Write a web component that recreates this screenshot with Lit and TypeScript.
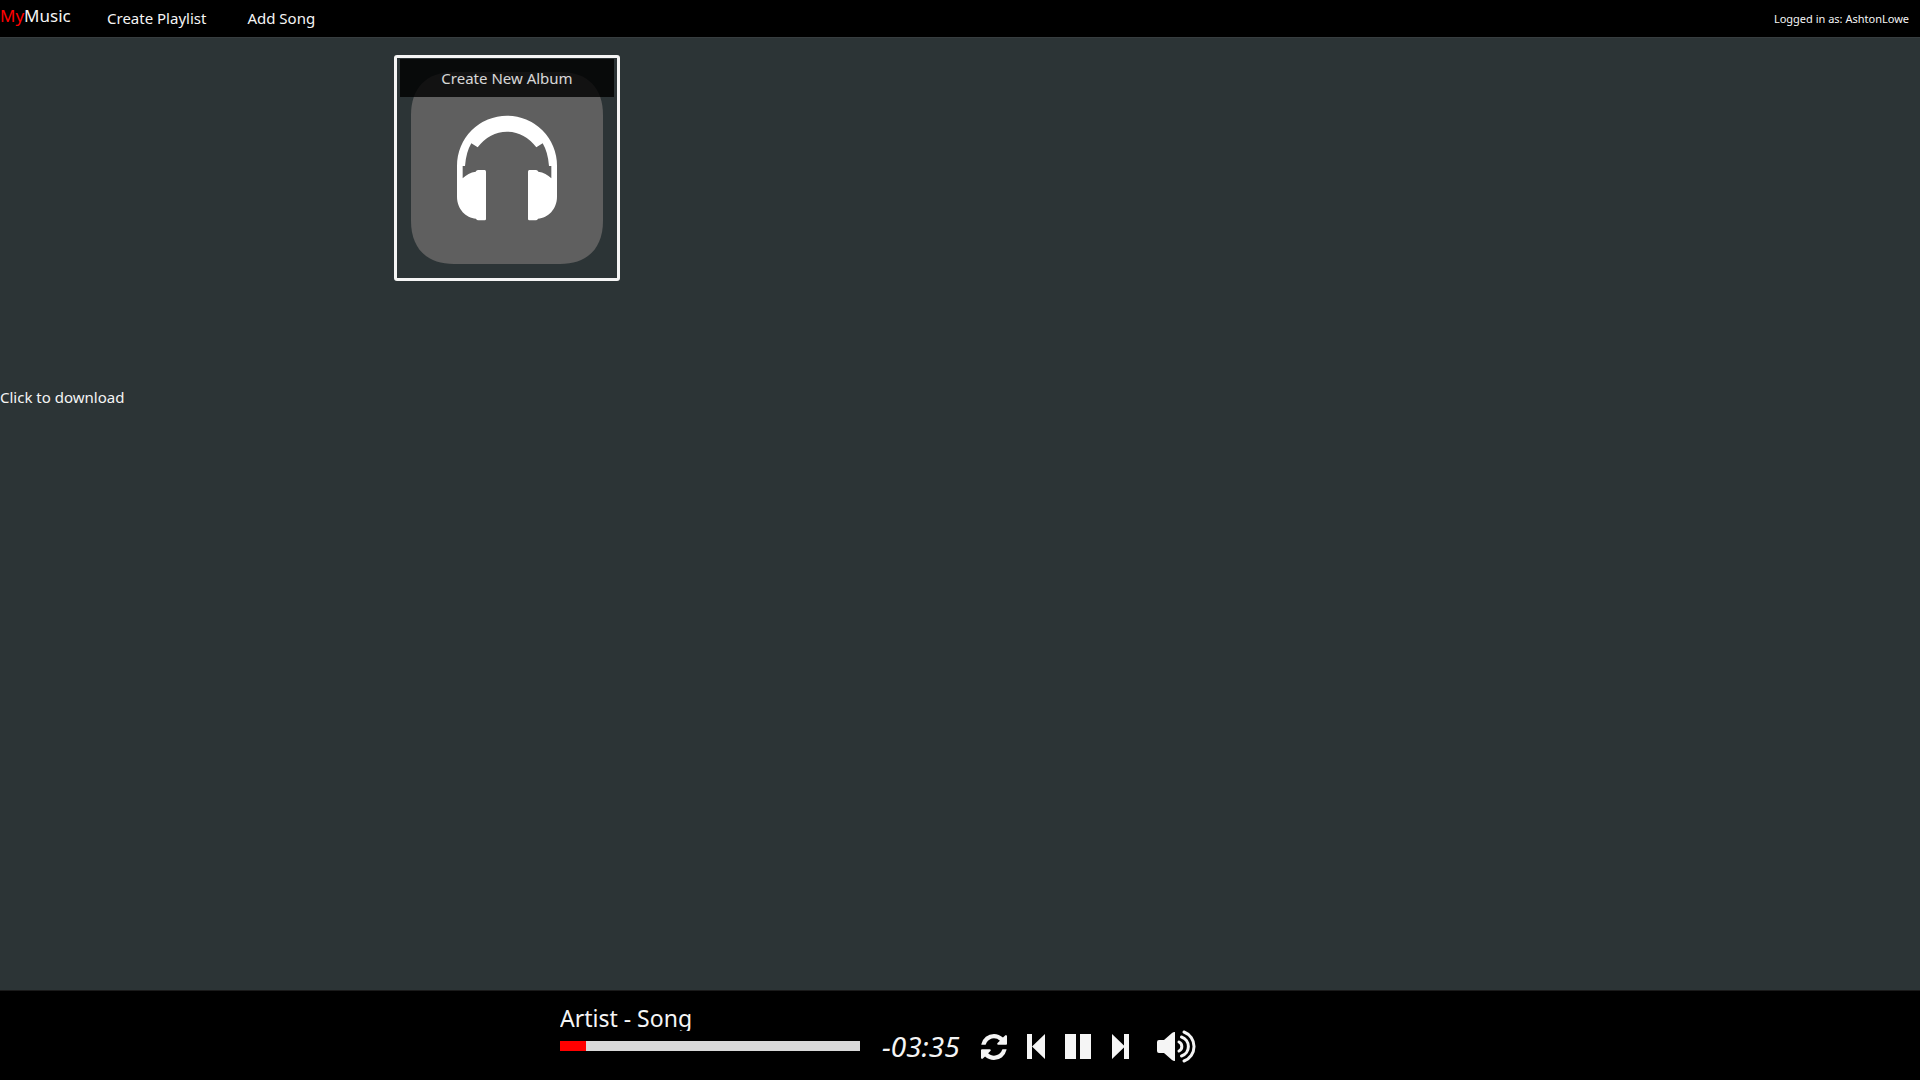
import { LitElement, html, css } from "lit";
import { customElement, property } from "lit/decorators.js";

@customElement("album-card")
export class AlbumCard extends LitElement {
  @property() label = "";

  static styles = css`
    :host {
      display: block;
    }
    .card {
      position: relative;
      display: block;
      box-sizing: border-box;
      width: 226px;
      height: 226px;
      padding: 14px;
      border: 3px solid #f5f5f5;
      border-radius: 3px;
      background: none;
      font: inherit;
      cursor: pointer;
    }
    .cover {
      display: block;
      width: 192px;
      height: 192px;
    }
    .caption {
      position: absolute;
      top: 1px;
      left: 3px;
      right: 3px;
      height: 38px;
      line-height: 38px;
      text-align: center;
      font-size: 15px;
      color: #f5f5f5;
      background: #000;
      opacity: 0.8;
    }
  `;

  render() {
    return html`
      <button class="card" type="button">
        <svg class="cover" viewBox="81 81 576 576" aria-hidden="true">
          <path
            fill="#5f5f5f"
            d="M210 81H528C612 81 657 130 657 210V528C657 608 612 657 528 657H210C126 657 81 608 81 528V210C81 130 126 81 210 81Z"
          />
          <path
            fill="#fff"
            d="M219 362A150 150 0 0 1 519 362V455C519 492 492 519 462 521Q460 526 455 526H436Q432 526 432 522V380Q432 375 436 375H456Q461 375 463 380Q486 383 502 400V363H495Q492 322 476 295L457 307Q421 260 369 260Q317 260 281 307L262 295Q246 322 243 363H236V400Q252 383 275 380Q277 375 282 375H302Q306 375 306 380V522Q306 526 302 526H283Q278 526 276 521C246 519 219 492 219 455Z"
          />
        </svg>
        <span class="caption">${this.label}</span>
      </button>
    `;
  }
}

@customElement("music-player")
export class MusicPlayer extends LitElement {
  @property() track = "";
  @property() remaining = "";
  @property({ type: Number }) elapsed = 0;

  static styles = css`
    :host {
      display: block;
      background: #000;
      border-top: 1px solid #1a1a1a;
      color: #f5f5f5;
    }
    .inner {
      box-sizing: border-box;
      display: flex;
      align-items: flex-start;
      max-width: 800px;
      height: 89px;
      margin: 0 auto;
      padding-top: 12px;
    }
    .song {
      width: 300px;
      margin-right: 22px;
    }
    .title {
      height: 28px;
      margin-bottom: 10px;
      overflow: hidden;
      font-size: 23px;
      line-height: 31px;
      white-space: nowrap;
    }
    progress {
      display: block;
      appearance: none;
      width: 100%;
      height: 10px;
      border: 0;
      background: #d9d9d9;
    }
    progress::-webkit-progress-bar {
      background: #d9d9d9;
    }
    progress::-webkit-progress-value {
      background: #f00;
    }
    .controls {
      display: flex;
      align-items: flex-start;
      margin-top: 27px;
    }
    .time {
      width: 99px;
      font-size: 28px;
      font-style: italic;
      line-height: 32px;
      white-space: nowrap;
    }
    .transport {
      display: flex;
      align-items: center;
      gap: 20px;
      margin-top: 4px;
    }
    button {
      display: block;
      padding: 0;
      border: 0;
      background: none;
      color: inherit;
      cursor: pointer;
    }
    .volume {
      margin-left: 28px;
    }
    svg {
      display: block;
      fill: currentColor;
    }
  `;

  render() {
    return html`
      <div class="inner">
        <div class="song">
          <div class="title">${this.track}</div>
          <progress max="300" .value=${this.elapsed} aria-label="Song position"></progress>
        </div>
        <div class="controls">
          <span class="time">${this.remaining}</span>
          <div class="transport">
            <button type="button" aria-label="Repeat">
              <svg width="26" height="26" viewBox="0 0 1536 1536">
                <path
                  d="M1511 928q0 5-1 7-64 268-268 434.500T764 1536q-146 0-282.500-55T238 1324l-129 129q-19 19-45 19t-45-19-19-45V960q0-26 19-45t45-19h448q26 0 45 19t19 45-19 45l-137 137q71 66 161 102t187 36q134 0 250-65t186-179q11-17 53-117 8-23 30-23h192q13 0 22.500 9.500t9.500 22.500zm25-800v448q0 26-19 45t-45 19h-448q-26 0-45-19t-19-45 19-45l138-138Q969 256 768 256q-134 0-250 65T332 500q-11 17-53 117-8 23-30 23H50q-13 0-22.500-9.500T18 608v-7q65-268 270-434.500T768 0q146 0 284 55.500T1297 212l130-129q19-19 45-19t45 19 19 45z"
                />
              </svg>
            </button>
            <button type="button" aria-label="Previous song">
              <svg width="18" height="26" viewBox="0 0 18 26">
                <path d="M0 0H5V25H0ZM18 0V25L5 12.500Z" />
              </svg>
            </button>
            <button type="button" aria-label="Pause">
              <svg width="26" height="26" viewBox="0 0 26 26">
                <path d="M0 0H11V25H0ZM15 0H26V25H15Z" />
              </svg>
            </button>
            <button type="button" aria-label="Next song">
              <svg width="18" height="26" viewBox="0 0 18 26">
                <path d="M1 0L14 12.500L1 25ZM13 0H18V25H13Z" />
              </svg>
            </button>
          </div>
          <button class="volume" type="button" aria-label="Volume">
            <svg width="40" height="34" viewBox="0 0 40 34">
              <path d="M2 10H7L15 3Q16 2 18 2V31Q16 31 15 30L7 23H2Q0 23 0 21V12Q0 10 2 10Z" />
              <path
                d="M22 12A5 5 0 0 1 22 21M24.500 7A10 10 0 0 1 24.500 26M27 2A15.500 15.500 0 0 1 27 31"
                fill="none"
                stroke="currentColor"
                stroke-width="3"
                stroke-linecap="round"
              />
            </svg>
          </button>
        </div>
      </div>
    `;
  }
}

@customElement("app-root")
export class AppRoot extends LitElement {
  static styles = css`
    :host {
      display: flex;
      flex-direction: column;
      min-height: 100vh;
      background: #2c3436;
      color: #f5f5f5;
      font-family: "Segoe UI", "Noto Sans", "Open Sans", sans-serif;
      font-size: 15px;
    }
    a {
      color: inherit;
      text-decoration: none;
    }
    .topbar {
      display: flex;
      align-items: flex-start;
      height: 37px;
      border-bottom: 1px solid #373d3f;
      background: #000;
      line-height: 37px;
    }
    .brand {
      width: 107px;
      font-size: 17px;
      line-height: 32px;
    }
    .brand-accent {
      color: #f00;
    }
    .nav {
      display: flex;
      gap: 41px;
    }
    .user {
      margin-left: auto;
      padding-right: 11px;
      font-size: 11px;
    }
    .content {
      flex: 1;
    }
    .albums {
      min-height: 331px;
      margin-left: 20%;
      padding: 17px 10px 0;
      box-sizing: border-box;
    }
    .download {
      display: inline-block;
      margin-top: 16px;
      line-height: 24px;
    }
  `;

  render() {
    return html`
      <header class="topbar">
        <a class="brand" href="#"><span class="brand-accent">My</span>Music</a>
        <nav class="nav">
          <a href="#playlist">Create Playlist</a>
          <a href="#song">Add Song</a>
        </nav>
        <span class="user">Logged in as: AshtonLowe</span>
      </header>
      <main class="content">
        <section class="albums">
          <album-card label="Create New Album"></album-card>
        </section>
        <a class="download" href="#download">Click to download</a>
      </main>
      <music-player track="Artist - Song" remaining="-03:35" .elapsed=${26}></music-player>
    `;
  }
}
